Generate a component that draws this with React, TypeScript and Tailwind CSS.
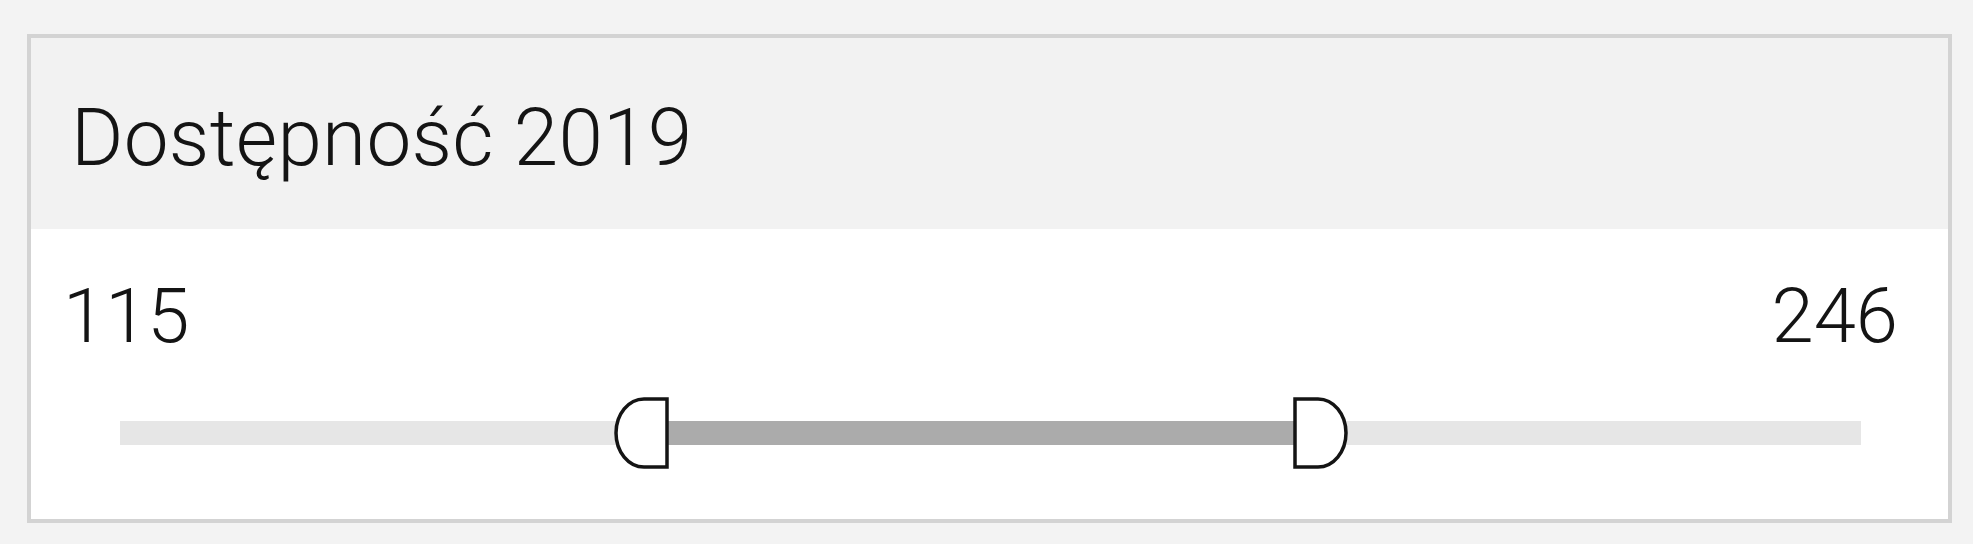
import React from "react"

type HandleProps = {
    side: "left" | "right"
    className: string
}

const Handle = ({side, className}: HandleProps) => {
    const d = side === "left"
        ? "M53 2 H30 A28 34 0 0 0 30 70 H53 Z"
        : "M3 2 H26 A28 34 0 0 1 26 70 H3 Z"
    return (
        <svg width={56} height={72} viewBox="0 0 56 72" className={className}>
            <path d={d} fill="#ffffff" stroke="#141414" strokeWidth={3.5} strokeLinejoin="miter" />
        </svg>
    )
}

export default function App() {
    return (
        <div className="w-[1973px] h-[544px] bg-[#f3f3f3] pl-[27px] pt-[34px] font-['Roboto',sans-serif] text-[#141414]">
            <div className="w-[1925px] h-[489px] border-4 border-[#d3d3d3] flex flex-col">
                <div className="h-[191px] bg-[#f2f2f2] flex items-center pl-[40px] pt-[8px]">
                    <h2 className="text-[80px] leading-none font-light tracking-[0.3px]">Dostępność 2019</h2>
                </div>

                <div className="flex-1 bg-white pt-[49px]">
                    <div className="flex justify-between pl-[32px] pr-[50px] text-[76px] leading-none font-light">
                        <span>115</span>
                        <span>246</span>
                    </div>

                    <div className="relative ml-[89px] mt-[43px] w-[1741px] h-[72px]">
                        <div className="absolute left-0 right-0 top-[24px] h-[24px] bg-[#e6e6e6]" />
                        <div className="absolute left-[548px] w-[626px] top-[24px] h-[24px] bg-[#ababab]" />
                        <Handle side="left" className="absolute left-[494px] top-0" />
                        <Handle side="right" className="absolute left-[1172px] top-0" />
                    </div>
                </div>
            </div>
        </div>
    )
}
